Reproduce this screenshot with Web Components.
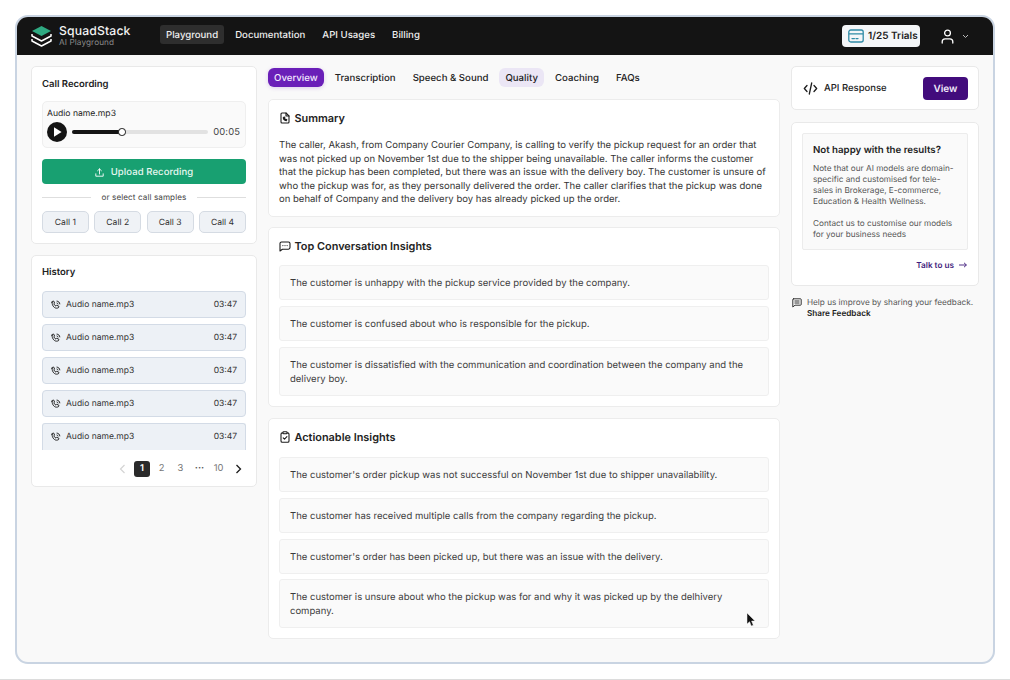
<!DOCTYPE html>
<html>
<head>
<meta charset="utf-8">
<style>
  html, body { margin: 0; height: 680px; overflow: hidden; background: #fff; }
  body { font-family: Inter, "Liberation Sans", sans-serif; color: #1c1c1c; text-rendering: geometricPrecision; }
  .page { box-sizing: border-box; height: 680px; padding: 15px 15px 15px; border-bottom: 1px solid #dcdcdc; }
</style>
</head>
<body>

<div class="page">
  <app-frame>
    <top-bar slot="top"></top-bar>

    <div slot="left" style="display:flex;flex-direction:column;gap:11px">
      <ui-card pad="10px 10px 11px" style="height:178px">
        <card-title>Call Recording</card-title>
        <audio-player name="Audio name.mp3" time="00:05" style="margin-top:9px"></audio-player>
        <upload-button style="margin-top:11px">Upload Recording</upload-button>
        <or-divider style="margin-top:7px">or select call samples</or-divider>
        <sample-row style="margin-top:8px">
          <sample-button>Call 1</sample-button>
          <sample-button>Call 2</sample-button>
          <sample-button>Call 3</sample-button>
          <sample-button>Call 4</sample-button>
        </sample-row>
      </ui-card>

      <ui-card pad="9px 10px 0" style="height:232px">
        <card-title>History</card-title>
        <history-list style="margin-top:11px">
          <history-row name="Audio name.mp3" time="03:47"></history-row>
          <history-row name="Audio name.mp3" time="03:47"></history-row>
          <history-row name="Audio name.mp3" time="03:47"></history-row>
          <history-row name="Audio name.mp3" time="03:47"></history-row>
          <history-row name="Audio name.mp3" time="03:47" last></history-row>
        </history-list>
        <page-nav></page-nav>
      </ui-card>
    </div>

    <div slot="middle">
      <tab-bar></tab-bar>
      <insight-card icon="file" heading="Summary" style="margin-top:12px;height:118px">
        <p style="margin:2px 0 0;font-size:9.52px;line-height:13.6px;color:#333">The caller, Akash, from Company Courier Company, is calling to verify the pickup request for an order that was not picked up on November 1st due to the shipper being unavailable. The caller informs the customer that the pickup has been completed, but there was an issue with the delivery boy. The customer is unsure of who the pickup was for, as they personally delivered the order. The caller clarifies that the pickup was done on behalf of Company and the delivery boy has already picked up the order.</p>
      </insight-card>
      <insight-card icon="chat" heading="Top Conversation Insights" style="margin-top:10px;height:180px">
        <insight-item>The customer is unhappy with the pickup service provided by the company.</insight-item>
        <insight-item>The customer is confused about who is responsible for the pickup.</insight-item>
        <insight-item>The customer is dissatisfied with the communication and coordination between the company and the delivery boy.</insight-item>
      </insight-card>
      <insight-card icon="clip" heading="Actionable Insights" style="margin-top:11px;height:221px;--head-gap:13px">
        <insight-item>The customer's order pickup was not successful on November 1st due to shipper unavailability.</insight-item>
        <insight-item>The customer has received multiple calls from the company regarding the pickup.</insight-item>
        <insight-item>The customer's order has been picked up, but there was an issue with the delivery.</insight-item>
        <insight-item style="margin-top:-1px">The customer is unsure about who the pickup was for and why it was picked up by the delhivery company.</insight-item>
      </insight-card>
    </div>

    <div slot="right" style="display:flex;flex-direction:column;gap:12px">
      <api-card></api-card>
      <help-card></help-card>
      <feedback-note></feedback-note>
    </div>

    <mouse-pointer slot="over"></mouse-pointer>
  </app-frame>
</div>

<script>
  // small helper so each class only has to hand over css and markup
  class Base extends HTMLElement {
    constructor() {
      super();
      this.attachShadow({ mode: 'open' });
    }
    connectedCallback() {
      this.shadowRoot.innerHTML = `<style>${this.css()}</style>${this.html()}`;
    }
    css() { return ':host{display:block}'; }
    html() { return '<slot></slot>'; }
  }

  const ICONS = {
    file: '<svg width="12" height="12" viewBox="0 0 12 12" fill="none" stroke="#1c1c1c" stroke-width="1.1" stroke-linejoin="round" stroke-linecap="round"><path d="M3 1h4l3 3v6a1 1 0 0 1-1 1H3a1 1 0 0 1-1-1V2a1 1 0 0 1 1-1z"/><path d="M7 1v3h3"/><path d="M4.3 5.6c0 1.8 1 2.9 3 3.1l.5-1-1-.5-.5.4c-.4-.2-.7-.6-.8-1l.4-.5-.5-1z"/></svg>',
    chat: '<svg width="12" height="12" viewBox="0 0 12 12" fill="none" stroke="#1c1c1c" stroke-width="1.1" stroke-linejoin="round" stroke-linecap="round"><path d="M2.6 2h6.8A1.6 1.6 0 0 1 11 3.6v4A1.6 1.6 0 0 1 9.4 9.2H3.4L1 11V3.6A1.6 1.6 0 0 1 2.6 2z"/><path d="M3.9 5.6h.01M6 5.6h.01M8.1 5.6h.01"/></svg>',
    clip: '<svg width="12" height="12" viewBox="0 0 12 12" fill="none" stroke="#1c1c1c" stroke-width="1.1" stroke-linejoin="round" stroke-linecap="round"><rect x="2" y="1.9" width="8" height="9.3" rx="1.3"/><rect x="4" y=".8" width="4" height="2" rx=".5" fill="#fff"/><path d="M4.2 6.9l1.3 1.3 2.4-2.5"/></svg>'
  };

  class AppFrame extends Base {
    css() {
      return `
        :host { display: block; box-sizing: border-box; height: 649px; border: 2px solid #c9d4e2; border-radius: 13px; background: #f9f9f9; overflow: hidden; position: relative; }
        .cols { display: grid; grid-template-columns: 226px 512px 188px; column-gap: 11px; padding: 11px 14px 0; }
      `;
    }
    html() {
      return `
        <slot name="top"></slot>
        <div class="cols">
          <div><slot name="left"></slot></div>
          <div><slot name="middle"></slot></div>
          <div><slot name="right"></slot></div>
        </div>
        <slot name="over"></slot>
      `;
    }
  }

  class TopBar extends Base {
    css() {
      return `
        :host { display: flex; align-items: center; height: 38px; background: #141414; color: #fff; padding: 0 14px; box-sizing: border-box; }
        .logo { width: 21px; height: 22px; margin-right: 7px; display: block; }
        .brand { width: 101px; }
        .name { font-size: 12.2px; font-weight: 500; line-height: 14px; letter-spacing: .15px; color: #f2f2f2; margin-top: -2px; }
        .sub { font-size: 8.2px; line-height: 10px; color: #8b8b8b; letter-spacing: .1px; margin-top: -1px; }
        nav { display: flex; gap: 5px; margin-bottom: 3px; }
        a { height: 19px; font-size: 9.65px; font-weight: 500; line-height: 21px; padding: 0 6px; border-radius: 3px; color: #f0f0f0; }
        a.on { background: #2e2e2e; }
        .spacer { flex: 1; }
        .trials { display: flex; align-items: center; gap: 4px; height: 22px; width: 78px; box-sizing: border-box; padding-left: 6px; background: #f4f6f8; border-radius: 4px; color: #1c1c1c; font-size: 10px; font-weight: 600; }
        .user { margin-left: 21px; display: block; }
        .chev { margin-left: 8px; margin-right: 10px; display: block; }
      `;
    }
    html() {
      return `
        <svg class="logo" viewBox="0 0 21 22" fill="none">
          <path d="M10.5 1l9.5 5-9.5 5L1 6z" fill="#2faa82"/>
          <path d="M1 9v2l9.5 5 9.5-5V9" stroke="#fff" stroke-width="1.5" stroke-linejoin="round"/>
          <path d="M1 14v2l9.5 5 9.5-5v-2" stroke="#fff" stroke-width="1.5" stroke-linejoin="round"/>
        </svg>
        <div class="brand"><div class="name">SquadStack</div><div class="sub">AI Playground</div></div>
        <nav>
          <a class="on">Playground</a><a>Documentation</a><a>API Usages</a><a>Billing</a>
        </nav>
        <div class="spacer"></div>
        <div class="trials">
          <svg width="16" height="14" viewBox="0 0 16 14" fill="none" stroke="#2f8ba6" stroke-width="1.3"><rect x=".8" y="1" width="14.4" height="12" rx="2"/><path d="M.8 4.8h14.4"/><path d="M4 9.6h2.4M8 9.6h2" stroke-linecap="round"/></svg>
          <span>1/25 Trials</span>
        </div>
        <svg class="user" width="13" height="15" viewBox="0 0 13 15" fill="none" stroke="#fff" stroke-width="1.3" stroke-linecap="round"><circle cx="6.5" cy="4" r="2.9"/><path d="M1.2 14v-1.2c0-1.8 1.3-3 3-3h4.6c1.7 0 3 1.2 3 3V14"/></svg>
        <svg class="chev" width="7" height="5" viewBox="0 0 7 5" fill="none" stroke="#bbb" stroke-width="1"><path d="M1 1l2.5 2.5L6 1"/></svg>
      `;
    }
  }

  class UiCard extends Base {
    css() {
      return `
        :host { display: block; box-sizing: border-box; background: #fff; border: 1px solid #e9e9e9; border-radius: 5px; padding: ${this.getAttribute('pad') || '10px'}; overflow: hidden; }
      `;
    }
  }

  class CardTitle extends Base {
    css() { return ':host{display:block;font-size:9.5px;font-weight:600;line-height:14px;padding-top:1px;color:#222}'; }
  }

  class AudioPlayer extends Base {
    css() {
      return `
        :host { display: block; box-sizing: border-box; height: 47px; background: #fafafa; border: 1px solid #efefef; border-radius: 5px; padding: 5px 5px 0 4px; }
        .n { font-size: 8.6px; line-height: 12px; color: #222; margin-top: 1px; }
        .r { display: flex; align-items: center; margin-top: 2px; }
        .play { width: 20px; height: 20px; display: block; flex: none; }
        .track { flex: 1; height: 3.5px; margin: 0 5px; background: #e2e2e2; border-radius: 2px; position: relative; }
        .fill { width: 50px; height: 100%; background: #141414; border-radius: 2px; }
        .knob { position: absolute; left: 46px; top: -2px; box-sizing: border-box; width: 7.5px; height: 7.5px; border: 1.5px solid #141414; border-radius: 50%; background: #fff; }
        .t { font-size: 9.4px; color: #444; letter-spacing: .1px; }
      `;
    }
    html() {
      return `
        <div class="n">${this.getAttribute('name')}</div>
        <div class="r">
          <svg class="play" viewBox="0 0 20 20"><circle cx="10" cy="10" r="10" fill="#141414"/><path d="M7 5.3v9.4l7.6-4.7z" fill="#fff"/></svg>
          <div class="track"><div class="fill"></div><div class="knob"></div></div>
          <div class="t">${this.getAttribute('time')}</div>
        </div>
      `;
    }
  }

  class UploadButton extends Base {
    css() {
      return `
        :host { display: flex; align-items: center; justify-content: center; gap: 7px; box-sizing: border-box; height: 25px; padding-top: 1px; background: #18a071; border-radius: 4px; color: #e9f8f2; font-size: 9.5px; font-weight: 500; letter-spacing: .1px; }
      `;
    }
    html() {
      return `<svg width="9" height="9" viewBox="0 0 9 9" fill="none" stroke="#fff" stroke-width=".9" stroke-linecap="round" stroke-linejoin="round"><path d="M4.5 6V1M2.6 2.7L4.5.9l1.9 1.8M.8 5.8v2.4h7.4V5.8"/></svg><slot></slot>`;
    }
  }

  class OrDivider extends Base {
    css() {
      return `
        :host { display: flex; align-items: center; gap: 11px; font-size: 8.1px; line-height: 12px; color: #444; letter-spacing: .1px; white-space: nowrap; }
        i { flex: 1; height: 1px; background: #dedede; }
      `;
    }
    html() { return '<i></i><slot></slot><i></i>'; }
  }

  class SampleRow extends Base {
    css() { return ':host{display:grid;grid-template-columns:repeat(4,1fr);column-gap:5.5px}'; }
  }

  class SampleButton extends Base {
    css() {
      return ':host{display:flex;align-items:center;justify-content:center;box-sizing:border-box;height:22px;padding-top:1px;background:#eff2f6;border:1px solid #d5dbe3;border-radius:5px;font-size:8.6px;color:#333}';
    }
  }

  class HistoryList extends Base {
    css() { return ':host{display:flex;flex-direction:column;gap:6px}'; }
  }

  class HistoryRow extends Base {
    css() {
      const last = this.hasAttribute('last');
      return `
        :host { display: flex; align-items: center; box-sizing: border-box; height: 27px; background: #edf1f6; border: 1px solid #d3dbe6; ${last ? 'border-bottom: 0;' : ''} border-radius: ${last ? '3px 3px 0 0' : '4px'}; padding: 0 8px; font-size: 8.5px; color: #333; }
        svg { display: block; margin-right: 5px; }
        .n { flex: 1; }
      `;
    }
    html() {
      return `
        <svg width="10" height="10" viewBox="0 0 10 10" fill="none" stroke="#1c1c1c" stroke-width=".95" stroke-linecap="round" stroke-linejoin="round"><path d="M1 2.2c0-.6.5-1.1 1.1-1.1h.6l.9 2-.8.8c.4 1 1.2 1.8 2.2 2.2l.8-.8 2 .9v.7c0 .6-.5 1.1-1.1 1.1C3.6 8.9 1 6 1 2.2z"/><path d="M6 1.1c1.5.1 2.7 1.3 2.8 2.8M6 3c.5.1.9.5 1 1"/></svg>
        <span class="n">${this.getAttribute('name')}</span>
        <span>${this.getAttribute('time')}</span>
      `;
    }
  }

  class PageNav extends Base {
    css() {
      return `
        :host { display: flex; align-items: center; justify-content: flex-end; margin-top: 10px; height: 17px; padding-right: 4px; font-size: 9.4px; color: #777; }
        span { width: 19px; text-align: center; }
        .on { width: 16px; height: 16px; line-height: 16px; background: #2a2a2a; color: #fff; border-radius: 3px; font-weight: 600; margin: 0 2px; }
        svg { display: block; }
      `;
    }
    html() {
      return `
        <svg width="7" height="10" viewBox="0 0 7 10" fill="none" stroke="#d4d4d4" stroke-width="1.2" style="margin-right:6px"><path d="M5.5 1L1.5 5l4 4"/></svg>
        <span class="on">1</span><span>2</span><span>3</span><span style="font-weight:700;color:#555">···</span><span>10</span>
        <svg width="7" height="10" viewBox="0 0 7 10" fill="none" stroke="#1c1c1c" stroke-width="1.3" style="margin-left:7px"><path d="M1.5 1l4 4-4 4"/></svg>
      `;
    }
  }

  class TabBar extends Base {
    css() {
      return `
        :host { display: flex; gap: 5px; height: 19px; margin-top: 2px; font-size: 9.65px; font-weight: 500; line-height: 21px; color: #222; }
        span { height: 19px; padding: 0 6px; border-radius: 6px; }
        .on { background: #6a1fb8; color: #f3eaff; box-shadow: 0 1px 4px rgba(106,31,184,.2); }
        .soft { background: #ebe6f5; }
      `;
    }
    html() {
      return `<span class="on">Overview</span><span>Transcription</span><span>Speech &amp; Sound</span><span class="soft">Quality</span><span>Coaching</span><span>FAQs</span>`;
    }
  }

  class InsightCard extends Base {
    css() {
      return `
        :host { display: block; box-sizing: border-box; background: #fff; border: 1px solid #ececec; border-radius: 5px; padding: 11px 10px 0; overflow: hidden; }
        h3 { display: flex; align-items: center; gap: 3.5px; margin: 0 0 var(--head-gap, 12px); font-size: 10.9px; font-weight: 600; line-height: 14px; color: #222; }
        svg { display: block; }
        .b { display: flex; flex-direction: column; gap: 6px; }
      `;
    }
    html() {
      return `<h3>${ICONS[this.getAttribute('icon')]}${this.getAttribute('heading')}</h3><div class="b"><slot></slot></div>`;
    }
  }

  class InsightItem extends Base {
    css() {
      return `
        :host { display: block; background: #fafafa; border: 1px solid #efefef; border-radius: 3px; padding: 11px 10px 8px; font-size: 9.5px; line-height: 14px; color: #3a3a3a; }
      `;
    }
  }

  class ApiCard extends Base {
    css() {
      return `
        :host { display: flex; align-items: center; box-sizing: border-box; height: 44px; background: #fff; border: 1px solid #e9e9e9; border-radius: 5px; padding: 0 10px 0 11px; }
        svg { display: block; margin-right: 6px; }
        span { flex: 1; font-size: 9.5px; font-weight: 500; color: #222; }
        button { all: unset; width: 45px; height: 23px; line-height: 24px; text-align: center; background: #420c7c; color: #f1e9fa; font-size: 10px; font-weight: 600; border-radius: 4px; }
      `;
    }
    html() {
      return `
        <svg width="15" height="13" viewBox="0 0 14 13" fill="none" stroke="#1c1c1c" stroke-width="1.3" stroke-linecap="round" stroke-linejoin="round"><path d="M3.5 3.5L.8 6.5l2.7 3M10.5 3.5l2.7 3-2.7 3M8.2 1L5.8 12"/></svg>
        <span>API Response</span><button>View</button>
      `;
    }
  }

  class HelpCard extends Base {
    css() {
      return `
        :host { display: block; box-sizing: border-box; height: 164px; background: #fff; border: 1px solid #e9e9e9; border-radius: 5px; padding: 10px 10px 0; }
        .box { box-sizing: border-box; height: 117px; background: #fafafa; border: 1px solid #ececec; border-radius: 2px; padding: 10px 10px 0; }
        h4 { margin: 0 0 5px; font-size: 9.7px; font-weight: 600; line-height: 14px; color: #222; }
        p { margin: 0 0 11px; font-size: 8.2px; line-height: 11px; color: #555; }
        .link { display: flex; justify-content: flex-end; align-items: center; gap: 5px; margin-top: 10px; padding-right: 1px; font-size: 8.2px; font-weight: 600; color: #3f1c7c; }
        svg { display: block; }
      `;
    }
    html() {
      return `
        <div class="box">
          <h4>Not happy with the results?</h4>
          <p>Note that our AI models are domain-specific and customised for tele-sales in Brokerage, E-commerce, Education &amp; Health Wellness.</p>
          <p>Contact us to customise our models for your business needs</p>
        </div>
        <div class="link">Talk to us <svg width="8" height="6" viewBox="0 0 8 6" fill="none" stroke="#3f1c7c" stroke-width=".9"><path d="M0 3h7.4M5 .8L7.4 3 5 5.2"/></svg></div>
      `;
    }
  }

  class FeedbackNote extends Base {
    css() {
      return `
        :host { display: flex; gap: 5px; margin-top: -1px; padding-left: 1px; font-size: 8.2px; line-height: 11px; color: #555; }
        svg { display: block; margin-top: 1px; flex: none; }
        b { display: block; font-weight: 600; color: #222; }
      `;
    }
    html() {
      return `
        <svg width="10" height="10" viewBox="0 0 10 10" fill="none" stroke="#333" stroke-width="1" stroke-linejoin="round" stroke-linecap="round"><path d="M1.5.8h7a.7.7 0 0 1 .7.7v5a.7.7 0 0 1-.7.7H3L.8 9V1.5a.7.7 0 0 1 .7-.7z"/><path d="M2.9 3h4.2M2.9 5h4.2"/></svg>
        <div>Help us improve by sharing your feedback.<b>Share Feedback</b></div>
      `;
    }
  }

  // the recording's pointer lies over the last item
  class MousePointer extends Base {
    css() { return ':host{display:block;position:absolute;left:729px;top:595px;width:11px;height:16px}'; }
    html() {
      return `<svg width="11" height="16" viewBox="0 0 11 16"><path d="M1 1v11l2.6-2.3L5.3 14l2-.8-1.7-4.2H9z" fill="#111" stroke="#f0f0f0" stroke-width=".5"/></svg>`;
    }
  }

  customElements.define('app-frame', AppFrame);
  customElements.define('top-bar', TopBar);
  customElements.define('ui-card', UiCard);
  customElements.define('card-title', CardTitle);
  customElements.define('audio-player', AudioPlayer);
  customElements.define('upload-button', UploadButton);
  customElements.define('or-divider', OrDivider);
  customElements.define('sample-row', SampleRow);
  customElements.define('sample-button', SampleButton);
  customElements.define('history-list', HistoryList);
  customElements.define('history-row', HistoryRow);
  customElements.define('page-nav', PageNav);
  customElements.define('tab-bar', TabBar);
  customElements.define('insight-card', InsightCard);
  customElements.define('insight-item', InsightItem);
  customElements.define('api-card', ApiCard);
  customElements.define('help-card', HelpCard);
  customElements.define('feedback-note', FeedbackNote);
  customElements.define('mouse-pointer', MousePointer);
</script>
</body>
</html>
